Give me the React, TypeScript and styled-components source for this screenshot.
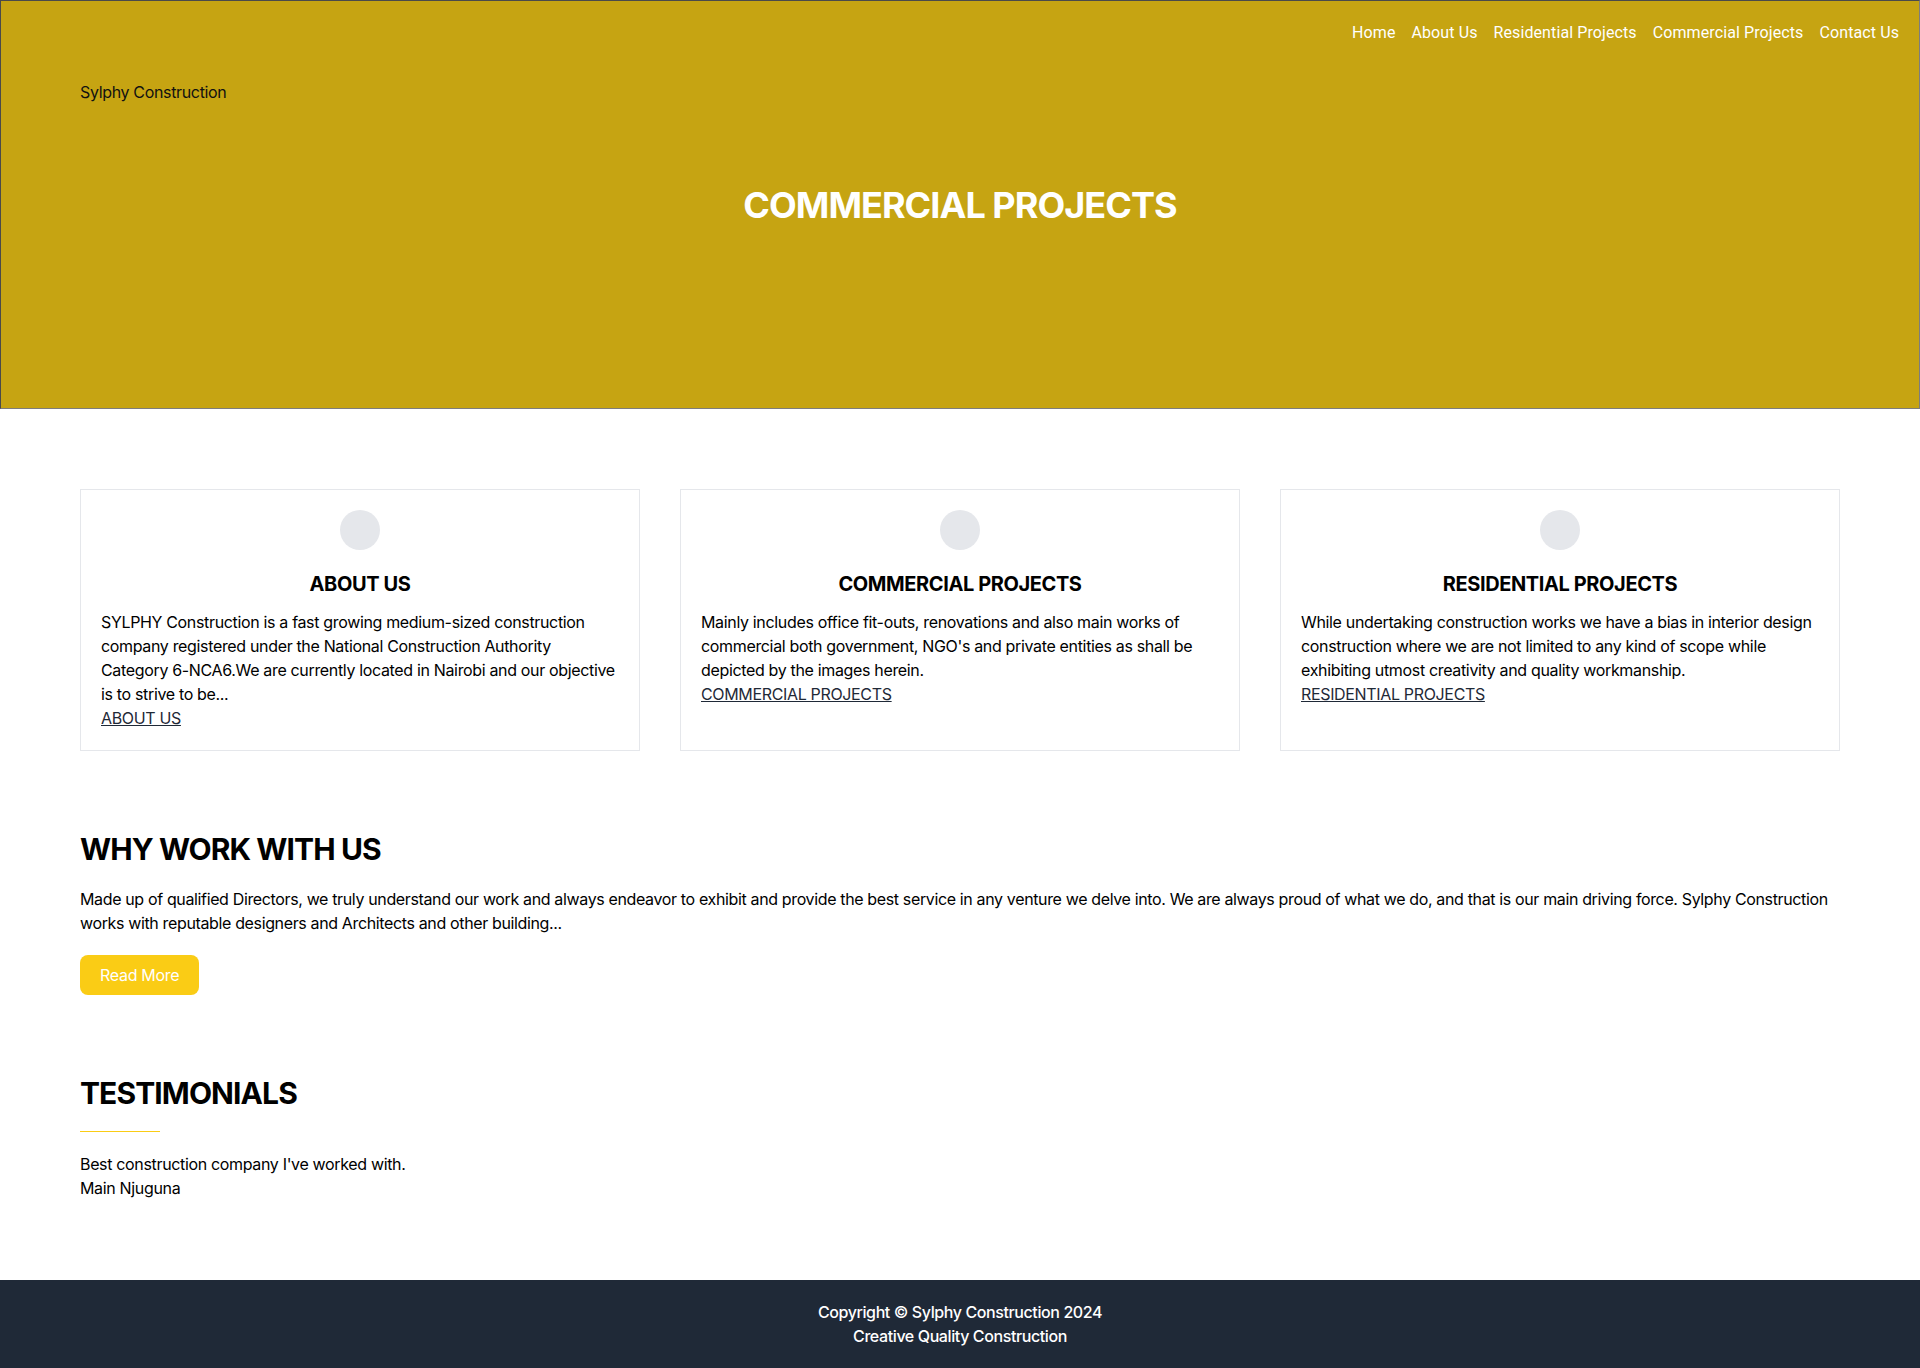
import React from "react";
import styled, { createGlobalStyle } from "styled-components";

const GlobalStyle = createGlobalStyle`
  html, body {
    margin: 0;
    padding: 0;
    background: #ffffff;
  }
  body {
    font-family: Inter, "Noto Sans", "Liberation Sans", sans-serif;
    color: #000000;
    font-size: 16px;
    line-height: 24px;
    letter-spacing: -0.34px;
  }
  * { box-sizing: border-box; }
`;

const Page = styled.div`
  display: flex;
  flex-direction: column;
  min-height: 1368px;
`;

const Header = styled.header`
  height: 409px;
  background: #c6a412;
  border: 1px solid #4a4a4a;
  border-bottom-color: #7d7d7d;
  border-right-color: #7d7d7d;
  display: flex;
  flex-direction: column;
`;

const Nav = styled.nav`
  display: flex;
  justify-content: flex-end;
  gap: 16px;
  padding: 20px 20px 0 20px;
`;

const NavLink = styled.a`
  font-family: Roboto, "Liberation Sans", sans-serif;
  font-size: 16px;
  line-height: 24px;
  letter-spacing: 0.1px;
  color: #ffffff;
  text-decoration: none;
`;

const Brand = styled.div`
  margin: 35px 0 0 79px;
  font-size: 16px;
  line-height: 24px;
  color: #111111;
`;

const HeroTitle = styled.h1`
  margin: 81px 0 0 0;
  text-align: center;
  font-size: 36px;
  line-height: 40px;
  font-weight: 700;
  color: #ffffff;
  letter-spacing: -0.95px;
`;

const Main = styled.main`
  padding: 80px 80px 79px 80px;
  flex: 1;
`;

const CardGrid = styled.div`
  display: grid;
  grid-template-columns: repeat(3, 1fr);
  gap: 40px;
`;

const Card = styled.div`
  border: 1px solid #e5e7eb;
  padding: 20px;
  display: flex;
  flex-direction: column;
`;

const Avatar = styled.div`
  width: 40px;
  height: 40px;
  border-radius: 50%;
  background: #e5e7eb;
  margin: 0 auto 20px auto;
`;

const CardTitle = styled.h3`
  margin: 0 0 12px 0;
  text-align: center;
  font-size: 20px;
  line-height: 28px;
  font-weight: 700;
  letter-spacing: -0.4px;
`;

const CardText = styled.p`
  margin: 0;
  font-size: 16px;
  line-height: 24px;
`;

const CardLink = styled.a`
  display: block;
  align-self: flex-start;
  color: #1f2937;
  text-decoration: underline;
  font-size: 16px;
  line-height: 24px;
`;

const Section = styled.section`
  margin-top: 80px;
`;

const SectionTitle = styled.h2`
  margin: 0 0 20px 0;
  font-size: 30px;
  line-height: 36px;
  font-weight: 700;
  letter-spacing: -0.9px;
`;

const Paragraph = styled.p`
  margin: 0 0 20px 0;
  font-size: 16px;
  line-height: 24px;
  letter-spacing: -0.36px;
`;

const Button = styled.button`
  font-family: Inter, "Liberation Sans", sans-serif;
  background: #facc15;
  color: #ffffff;
  border: none;
  border-radius: 8px;
  padding: 8px 20px;
  font-size: 16px;
  line-height: 24px;
  letter-spacing: -0.3px;
  cursor: pointer;
`;

const Divider = styled.div`
  width: 80px;
  height: 1px;
  background: #facc15;
  margin: 0 0 20px 0;
`;

const Quote = styled.p`
  margin: 0;
  font-size: 16px;
  line-height: 24px;
`;

const Footer = styled.footer`
  background: #1f2937;
  color: #ffffff;
  text-align: center;
  padding: 20px;
  font-size: 16px;
  line-height: 24px;
  font-weight: 500;
  letter-spacing: -0.4px;
`;

const FooterLine = styled.div``;

const cards = [
  {
    title: "ABOUT US",
    text: "SYLPHY Construction is a fast growing medium-sized construction company registered under the National Construction Authority Category 6-NCA6.We are currently located in Nairobi and our objective is to strive to be...",
    link: "ABOUT US",
  },
  {
    title: "COMMERCIAL PROJECTS",
    text: "Mainly includes office fit-outs, renovations and also main works of commercial both government, NGO's and private entities as shall be depicted by the images herein.",
    link: "COMMERCIAL PROJECTS",
  },
  {
    title: "RESIDENTIAL PROJECTS",
    text: "While undertaking construction works we have a bias in interior design construction where we are not limited to any kind of scope while exhibiting utmost creativity and quality workmanship.",
    link: "RESIDENTIAL PROJECTS",
  },
];

const navItems = ["Home", "About Us", "Residential Projects", "Commercial Projects", "Contact Us"];

export default function App() {
  return (
    <>
      <GlobalStyle />
      <Page>
        <Header>
          <Nav>
            {navItems.map((n) => (
              <NavLink key={n} href="#">
                {n}
              </NavLink>
            ))}
          </Nav>
          <Brand>Sylphy Construction</Brand>
          <HeroTitle>COMMERCIAL PROJECTS</HeroTitle>
        </Header>
        <Main>
          <CardGrid>
            {cards.map((c) => (
              <Card key={c.title}>
                <Avatar />
                <CardTitle>{c.title}</CardTitle>
                <CardText>{c.text}</CardText>
                <CardLink href="#">{c.link}</CardLink>
              </Card>
            ))}
          </CardGrid>
          <Section>
            <SectionTitle>WHY WORK WITH US</SectionTitle>
            <Paragraph>
              Made up of qualified Directors, we truly understand our work and always endeavor to exhibit and provide the
              best service in any venture we delve into. We are always proud of what we do, and that is our main driving
              force. Sylphy Construction works with reputable designers and Architects and other building...
            </Paragraph>
            <Button>Read More</Button>
          </Section>
          <Section>
            <SectionTitle>TESTIMONIALS</SectionTitle>
            <Divider />
            <Quote>Best construction company I've worked with.</Quote>
            <Quote>Main Njuguna</Quote>
          </Section>
        </Main>
        <Footer>
          <FooterLine>Copyright © Sylphy Construction 2024</FooterLine>
          <FooterLine>Creative Quality Construction</FooterLine>
        </Footer>
      </Page>
    </>
  );
}
